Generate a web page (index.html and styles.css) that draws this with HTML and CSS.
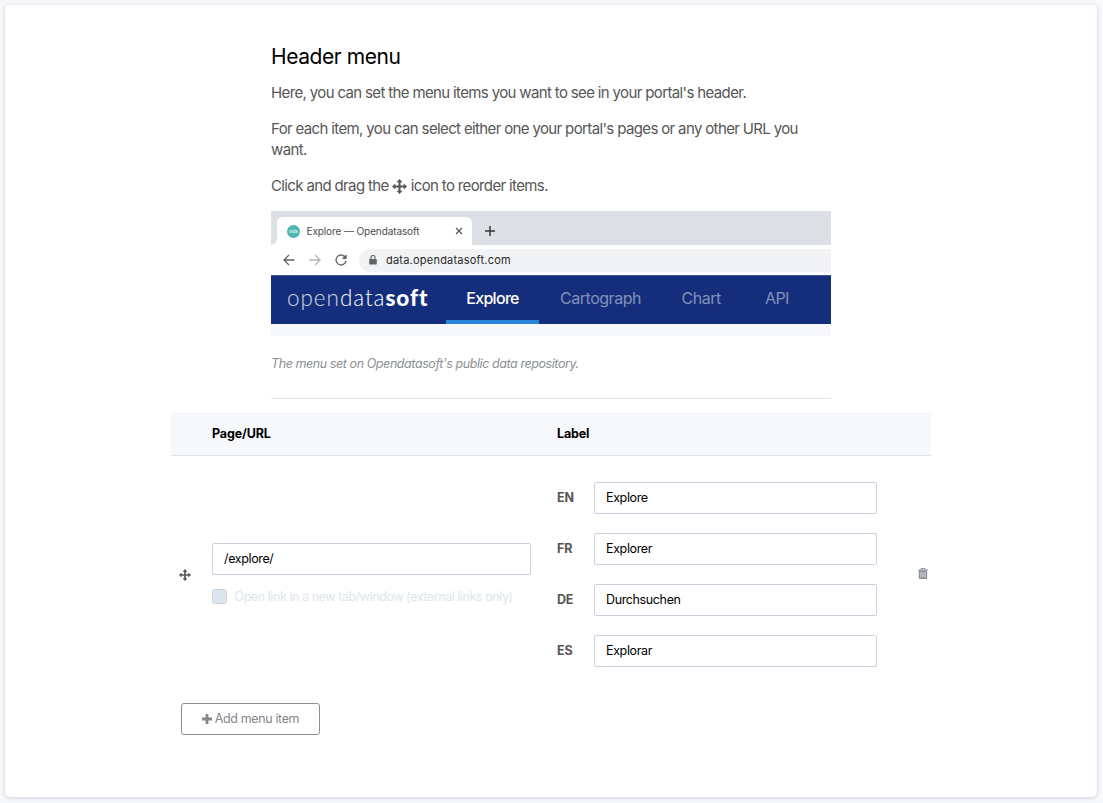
FILE: index.html
```html
<!DOCTYPE html>
<html lang="en">
<head>
<meta charset="utf-8">
<title>Header menu</title>
<link rel="stylesheet" href="styles.css">
</head>
<body>
<svg class="sprite" aria-hidden="true">
  <symbol id="move" viewBox="0 0 14 14"><path d="M7 0 9.8 3.1H8V6h2.9V4.2L14 7l-3.1 2.8V8H8v2.9h1.8L7 14l-2.8-3.1H6V8H3.1v1.8L0 7l3.1-2.8V6H6V3.1H4.2z"/></symbol>
</svg>
<main class="card">
  <section class="intro">
    <h1 class="title">Header menu</h1>
    <p class="text">Here, you can set the menu items you want to see in your portal's header.</p>
    <p class="text">For each item, you can select either one your portal's pages or any other URL you<br>want.</p>
    <p class="text">Click and drag the <svg class="inline-move"><use href="#move"/></svg> icon to reorder items.</p>
    <figure class="preview">
      <div class="tabs">
        <div class="tab">
          <span class="favicon">ods</span>
          <span class="tab-title">Explore — Opendatasoft</span>
          <svg class="close" viewBox="0 0 8 8"><path d="M1 1l6 6M7 1 1 7"/></svg>
        </div>
        <svg class="plus" viewBox="0 0 10 10"><path d="M5 0v10M0 5h10"/></svg>
      </div>
      <div class="toolbar">
        <svg class="nav-icon" viewBox="0 0 12 12"><path d="M11.5 6H1M6 1 1 6l5 5"/></svg>
        <svg class="nav-icon faded" viewBox="0 0 12 12"><path d="M.5 6H11M6 1l5 5-5 5"/></svg>
        <svg class="nav-icon" viewBox="0 0 12 12"><path d="M10.4 3.5A5 5 0 1 0 11 6.8"/><path class="solid" d="M11.6.3v4.8H6.8z"/></svg>
        <div class="address">
          <svg class="lock" viewBox="0 0 8 10"><path d="M1 4h6a.8.8 0 0 1 .8.8v4a.8.8 0 0 1-.8.8H1a.8.8 0 0 1-.8-.8v-4A.8.8 0 0 1 1 4z"/><path class="shackle" d="M2 4V2.5a2 2 0 0 1 4 0V4"/></svg>
          <span>data.opendatasoft.com</span>
        </div>
      </div>
      <div class="site">
        <span class="brand"><span class="thin">open</span>data<b>soft</b></span>
        <span class="site-link active">Explore</span>
        <span class="site-link carto">Cartograph</span>
        <span class="site-link chart">Chart</span>
        <span class="site-link api">API</span>
      </div>
    </figure>
    <p class="caption">The menu set on Opendatasoft's public data repository.</p>
    <hr class="rule">
  </section>
  <section class="table">
    <div class="head"><span class="head-page">Page/URL</span><span class="head-label">Label</span></div>
    <div class="row">
      <svg class="handle"><use href="#move"/></svg>
      <div class="page">
        <input class="field" value="/explore/">
        <label class="check"><span class="box"></span><span>Open link in a new tab/window (external links only)</span></label>
      </div>
      <div class="labels">
        <label class="lang"><b>EN</b><input class="field" value="Explore"></label>
        <label class="lang"><b>FR</b><input class="field" value="Explorer"></label>
        <label class="lang"><b>DE</b><input class="field" value="Durchsuchen"></label>
        <label class="lang"><b>ES</b><input class="field" value="Explorar"></label>
      </div>
      <svg class="trash" viewBox="0 0 10 11"><path class="lid" d="M0 2h10M3 2V.6h4V2"/><path fill-rule="evenodd" d="M.8 2.4h8.4V10a1 1 0 0 1-1 1H1.8a1 1 0 0 1-1-1zM2.6 4v5.5h.7V4zm2.05 0v5.5h.7V4zM6.7 4v5.5h.7V4z"/></svg>
    </div>
    <button class="add"><svg class="add-icon" viewBox="0 0 10 10"><path d="M3.6 0h2.8v3.6H10v2.8H6.4V10H3.6V6.4H0V3.6h3.6z"/></svg>Add menu item</button>
  </section>
</main>
</body>
</html>
```
FILE: styles.css
```css
* { box-sizing: border-box; }
body {
  margin: 0;
  padding: 5px 6px 6px 5px;
  height: 803px;
  background: #f6f8fc;
  font-family: Inter, "Liberation Sans", sans-serif;
  font-size: 12.5px;
  color: #000;
}
.sprite { display: none; }
.card {
  height: 792px;
  background: #fff;
  border-radius: 5px;
  box-shadow: 0 1px 4px rgba(30, 40, 70, .18);
  padding-top: 38px;
}
.intro { width: 560px; margin-left: 266px; }
.title { margin: 0 0 12px; font-size: 21px; line-height: 27px; font-weight: 400; letter-spacing: -.42px; }
.text { margin: 0 0 15px; font-size: 15px; line-height: 21px; color: #565656; letter-spacing: -.62px; white-space: nowrap; word-spacing: -.1px; }
.inline-move { width: 15px; height: 15px; margin: -3px 0 0; vertical-align: -3px; fill: #565656; }
.preview { margin: 0; height: 125px; background: #f6f8fc; }
.tabs { height: 34px; background: radial-gradient(circle at 0 0, transparent 5.5px, #fff 6px) 0 28px / 6px 6px no-repeat #dde1e6; display: flex; align-items: flex-end; padding-left: 6px; }
.tab { width: 195px; height: 28px; background: #fff; border-radius: 6px 6px 0 0; display: flex; align-items: center; padding: 0 9px 0 10px; }
.favicon { width: 13px; height: 13px; border-radius: 50%; background: #4db6ac; color: #e2f5f2; font-size: 5px; font-weight: 600; line-height: 13px; text-align: center; margin-right: 6.5px; }
.tab-title { font-size: 10px; color: #4a4d51; white-space: nowrap; flex: 1; letter-spacing: -.1px; }
.close { width: 8px; height: 8px; fill: none; stroke: #4f5357; stroke-width: 1.1; }
.plus { width: 10px; height: 10px; margin: 0 0 9px 13px; fill: none; stroke: #33373a; stroke-width: 1.5; }
.toolbar { height: 30px; background: #fff; display: flex; align-items: center; padding-left: 12px; gap: 14px; }
.nav-icon { width: 12px; height: 12px; fill: none; stroke: #5f6368; stroke-width: 1.3; }
.nav-icon.faded { stroke: #b2b4b7; }
.nav-icon .solid { fill: #5f6368; stroke: none; }
.address { flex: 1; height: 23px; margin-left: -2px; background: #f1f3f4; border-radius: 12px 0 0 12px; display: flex; align-items: center; padding-left: 10px; gap: 9px; font-size: 11px; letter-spacing: .22px; color: #26292c; }
.lock { width: 8px; height: 10px; fill: #5f6368; }
.lock .shackle { fill: none; stroke: #5f6368; stroke-width: 1.1; }
.site { height: 49px; background: #142e7b; border-top: 1px solid #43578f; display: flex; color: #8391bb; font-size: 16px; line-height: 44px; letter-spacing: -.47px; }
.brand { width: 159px; margin-left: 16px; font-family: Lato, sans-serif; font-size: 22.5px; font-weight: 300; color: #fff; letter-spacing: .95px; white-space: nowrap; }
.brand b { font-weight: 900; }
.thin { opacity: .8; }
.active { width: 93px; margin-right: 1px; border-bottom: 4px solid #2a85d8; color: #fff; text-align: center; font-weight: 500; letter-spacing: -.7px; }
.carto { width: 82px; margin-left: 20px; }
.chart { width: 40px; margin-left: 39.5px; }
.api { margin-left: 43.5px; letter-spacing: -.6px; }
.caption { margin: 17px 0 0; font-size: 12.5px; line-height: 21px; font-style: italic; color: #8b8f96; letter-spacing: -.42px; white-space: nowrap; }
.rule { margin: 24px 0 0; border: 0; border-top: 1px solid #dde4f0; }
.table { width: 760px; margin: 13px 0 0 166px; }
.head { height: 44px; background: #f6f8fc; border-bottom: 1px solid #dee3eb; display: flex; align-items: center; font-weight: 700; padding-left: 41px; letter-spacing: -.15px; }
.head-page { width: 345px; }
.row { height: 237px; display: flex; align-items: center; padding-left: 8px; }
.handle { width: 12px; height: 12px; margin-right: 21px; fill: #565656; }
.page { width: 319px; margin-right: 26px; }
.field { display: block; width: 100%; height: 32px; margin: 0; border: 1px solid #cbd1de; border-radius: 2px; padding: 0 11px 1px; font: 12.5px Inter, "Liberation Sans", sans-serif; letter-spacing: -.37px; color: #000; background: #fff; }
.check { display: flex; align-items: center; gap: 7.5px; margin-top: 11px; height: 21px; color: #dee5ef; letter-spacing: -.43px; white-space: nowrap; }
.box { width: 15px; height: 15px; border: 1px solid #cbd4e1; border-radius: 3px; background: #dee5ee; }
.labels { width: 320px; display: grid; gap: 19px; }
.lang { display: grid; grid-template-columns: 37px 283px; align-items: center; color: #565656; }
.lang b { padding-bottom: 1px; letter-spacing: -.2px; }
.trash { width: 10px; height: 11px; margin: -2px 0 0 41px; fill: #8b8f96; }
.trash .lid { fill: none; stroke: #8b8f96; stroke-width: 1; }
.add { display: flex; align-items: center; justify-content: center; gap: 3px; width: 139px; height: 32px; margin: 10px 0 0 10px; padding: 0 0 1px; border: 1px solid #8b8d92; border-radius: 3px; background: #fff; font: 12.5px Inter, "Liberation Sans", sans-serif; letter-spacing: -.37px; color: #85878c; }
.add-icon { width: 10px; height: 10px; fill: #85878c; }
```
